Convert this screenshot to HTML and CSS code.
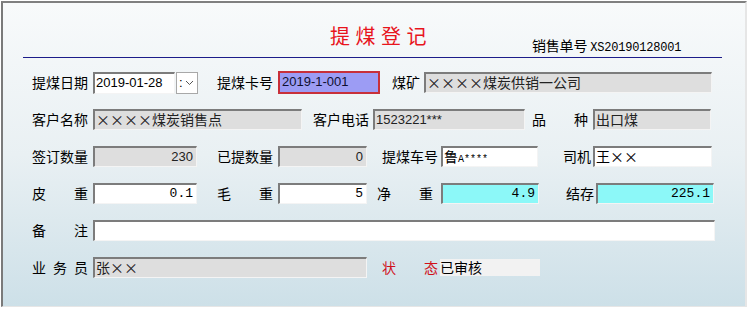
FILE: index.html
```html
<!DOCTYPE html>
<html lang="zh-CN">
<head>
  <meta charset="UTF-8">
  <title>提煤登记</title>
  <link rel="stylesheet" href="styles.css">
</head>
<body>
  <div class="window">
    <!-- Title bar of the form -->
    <div class="header">
      <h1 class="title">提煤登记</h1>
      <div class="order-no">销售单号 <span class="mono">XS20190128001</span></div>
    </div>

    <div class="form">
      <div class="row">
        <span class="lbl">提煤日期</span>
        <div class="box sans w-date">2019-01-28</div>
        <div class="drop">
          <span class="colon">:</span>
          <svg width="9" height="6" viewBox="0 0 9 6"><path d="M1 1 L4.5 4.5 L8 1" fill="none" stroke="#555" stroke-width="1"/></svg>
        </div>
        <span class="lbl ml-19">提煤卡号</span>
        <div class="box sans card w-card">2019-1-001</div>
        <span class="lbl short ml-12 mr-4">煤矿</span>
        <div class="box gray w-mine">××××煤炭供销一公司</div>
      </div>

      <div class="row">
        <span class="lbl">客户名称</span>
        <div class="box gray w-cust">××××煤炭销售点</div>
        <span class="lbl ml-11 mr-4">客户电话</span>
        <div class="box gray sans w-phone">1523221***</div>
        <span class="lbl ml-7">品种</span>
        <div class="box gray w-kind">出口煤</div>
      </div>

      <div class="row">
        <span class="lbl">签订数量</span>
        <div class="box gray sans num w-a">230</div>
        <span class="lbl ml-20">已提数量</span>
        <div class="box gray sans num w-b">0</div>
        <span class="lbl ml-15 mr-3">提煤车号</span>
        <div class="box w-truck">鲁<span class="mono small">A****</span></div>
        <span class="lbl short ml-25 mr-2">司机</span>
        <div class="box w-driver">王××</div>
      </div>

      <div class="row">
        <span class="lbl">皮重</span>
        <div class="box mono num w-a">0.1</div>
        <span class="lbl ml-20">毛重</span>
        <div class="box mono num w-b">5</div>
        <span class="lbl ml-10 mr-8">净重</span>
        <div class="box cyan mono num w-net">4.9</div>
        <span class="lbl short ml-27 mr-2">结存</span>
        <div class="box cyan mono num w-left">225.1</div>
      </div>

      <div class="row">
        <span class="lbl">备注</span>
        <div class="box w-note"></div>
      </div>

      <div class="row">
        <span class="lbl">业务员</span>
        <div class="box gray w-clerk">张××</div>
        <span class="lbl red ml-15 mr-2">状态</span>
        <div class="status">已审核</div>
      </div>
    </div>
  </div>
</body>
</html>
```

FILE: styles.css
```css
/* Page */
body {
  margin: 0;
  font-family: "Noto Sans CJK SC", sans-serif;
  font-size: 14px;
  color: #000;
  background: #fff;
}

.window {
  margin: 1px 0 0 1px;
  width: 746px;
  height: 306px;
  box-sizing: border-box;
  border-style: solid;
  border-width: 2px 2px 1px 2px;
  border-color: #808080 #e6e6e6 #e6e6e6 #7a7a7a;
  background: linear-gradient(to bottom, #f8fafb 0%, #e9f0f3 50%, #cde0e8 100%);
}

/* Header */
.header {
  display: flex;
  align-items: flex-start;
  height: 55px;
  margin: 0 23px 0 20px;
  padding-left: 307px;
  box-sizing: border-box;
  border-bottom: 1px solid #1c1c8a;
}

.title {
  width: 202px;
  margin: 21px 0 0 0;
  font-size: 20px;
  font-weight: normal;
  line-height: 24px;
  letter-spacing: 5.5px;
  color: #e8141c;
}

.order-no {
  margin-top: 34px;
  line-height: 16px;
  letter-spacing: -0.2px;
}

.mono {
  font-family: "Liberation Mono", monospace;
  font-size: 12px;
}

.mono.small {
  font-size: 10px;
}

/* Form rows */
.form {
  display: flex;
  flex-direction: column;
  gap: 16px;
  padding: 14px 0 0 29px;
}

.row {
  display: flex;
  align-items: center;
  height: 21px;
}

.lbl {
  flex: none;
  width: 56px;
  margin-right: 5px;
  text-align: justify;
  text-align-last: justify;
  line-height: 17px;
  white-space: nowrap;
}

.lbl.short { width: 28px; }
.lbl.red { color: #d0101a; }

.ml-7 { margin-left: 7px; }
.ml-10 { margin-left: 10px; }
.ml-11 { margin-left: 11px; }
.ml-12 { margin-left: 12px; }
.ml-15 { margin-left: 15px; }
.ml-19 { margin-left: 19px; }
.ml-20 { margin-left: 20px; }
.ml-25 { margin-left: 25px; }
.ml-27 { margin-left: 27px; }
.mr-2 { margin-right: 2px; }
.mr-3 { margin-right: 3px; }
.mr-4 { margin-right: 4px; }
.mr-8 { margin-right: 8px; }

/* Sunken text boxes */
.box {
  flex: none;
  height: 21px;
  box-sizing: border-box;
  padding: 0 3px 0 1px;
  border-style: solid;
  border-width: 2px 1px 1px 2px;
  border-color: #7c7c7c #f4f4f4 #f4f4f4 #7c7c7c;
  background: #fff;
  line-height: 17px;
  white-space: nowrap;
  overflow: hidden;
}

.box.sans {
  font-family: "Liberation Sans", sans-serif;
  font-size: 13px;
}

.box.mono {
  font-family: "Liberation Mono", monospace;
  font-size: 13px;
}

.box.num { text-align: right; }
.box.gray { background: #dedede; color: #222; }
.box.cyan { background: #8cf8f8; }

.box.card {
  height: 23px;
  border: 2px solid #c8303a;
  background: #9c9cf4;
  color: #101030;
  padding-left: 2px;
}

.w-date { width: 82px; height: 22px; }
.w-card { width: 102px; }
.w-mine { width: 288px; }
.w-cust { width: 209px; }
.w-phone { width: 152px; }
.w-kind { width: 118px; }
.w-a { width: 104px; }
.w-b { width: 89px; }
.w-truck { width: 97px; }
.w-driver { width: 119px; }
.w-net { width: 98px; }
.w-left { width: 118px; }
.w-note { width: 622px; }
.w-clerk { width: 274px; }

/* Date dropdown button */
.drop {
  flex: none;
  display: flex;
  align-items: center;
  gap: 2px;
  width: 22px;
  height: 22px;
  margin-left: 1px;
  box-sizing: border-box;
  padding-left: 2px;
  border: 1px solid #a8a8a8;
  background: #fff;
  font-family: "Liberation Sans", sans-serif;
  font-size: 13px;
}

.drop .colon {
  line-height: 16px;
}

/* Status display */
.status {
  width: 100px;
  height: 17px;
  line-height: 17px;
  background: #f2f2f2;
}
```
